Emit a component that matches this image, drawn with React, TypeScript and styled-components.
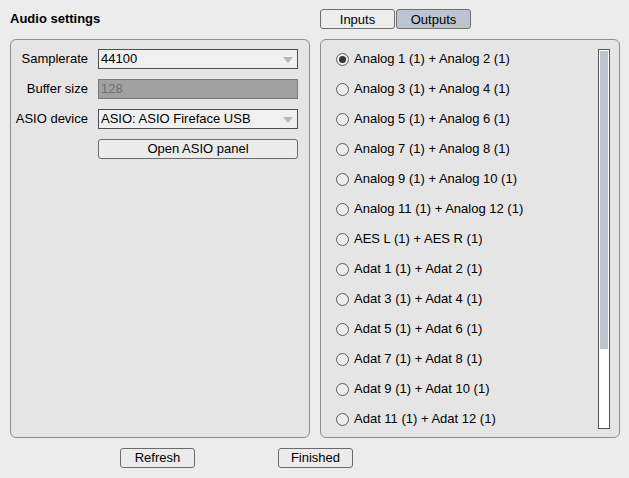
import React from "react";
import styled, { createGlobalStyle } from "styled-components";

const Global = createGlobalStyle`
  html, body { margin: 0; padding: 0; background: #ececec; }
  body { font-family: "Liberation Sans", Arial, sans-serif; font-size: 13px; color: #000; }
  * { box-sizing: border-box; }
`;

const Page = styled.div`
  width: 629px;
  height: 478px;
  padding: 9px 0 0 10px;
  display: grid;
  grid-template-columns: 300px 300px;
  grid-template-rows: 20px 399px 20px;
  column-gap: 10px;
  row-gap: 10px;
`;

const Title = styled.h1`
  margin: 0;
  font-size: 13px;
  font-weight: bold;
  line-height: 20px;
`;

const Tabs = styled.div`
  display: flex;
  gap: 1px;
`;

const Tab = styled.div<{ $active?: boolean }>`
  width: 75px;
  height: 20px;
  border: 1px solid #6e6e6e;
  border-radius: 3px;
  background: ${(p) => (p.$active ? "#bcc4d0" : "#ededed")};
  display: flex;
  align-items: center;
  justify-content: center;
  line-height: 1;
`;

const Panel = styled.div`
  background: #e5e5e5;
  border: 1px solid #8e8e8e;
  border-radius: 6px;
`;

const FormPanel = styled(Panel)`
  padding: 9px 11px 0 0;
  display: grid;
  grid-template-columns: 77px 200px;
  grid-auto-rows: 20px;
  column-gap: 10px;
  row-gap: 10px;
  align-content: start;
`;

const Label = styled.div`
  text-align: right;
  line-height: 20px;
`;

const Field = styled.div<{ $disabled?: boolean }>`
  position: relative;
  height: 20px;
  border: 1px solid ${(p) => (p.$disabled ? "#7a7a7a" : "#4f4f4f")};
  background: ${(p) => (p.$disabled ? "#a1a1a1" : "#f0f0f0")};
  color: ${(p) => (p.$disabled ? "#707070" : "#000")};
  padding-left: 2px;
  line-height: 18px;
  white-space: nowrap;
`;

const Arrow = styled.span`
  position: absolute;
  right: 4px;
  top: 7px;
  width: 0;
  height: 0;
  border-left: 5px solid transparent;
  border-right: 5px solid transparent;
  border-top: 6px solid #b6b6b6;
`;

const Button = styled.button<{ $width?: number }>`
  width: ${(p) => (p.$width ? `${p.$width}px` : "100%")};
  height: 20px;
  border: 1px solid #6a6a6a;
  border-radius: 3px;
  background: #ebebeb;
  font-family: inherit;
  font-size: 13px;
  color: #000;
  padding: 0;
  line-height: 18px;
`;

const ButtonCell = styled.div`
  grid-column: 2;
`;

const ListPanel = styled(Panel)`
  display: flex;
  padding: 9px 9px 9px 15px;
`;

const RadioList = styled.div`
  flex: 1;
  display: flex;
  flex-direction: column;
  gap: 10px;
`;

const RadioRow = styled.label`
  display: flex;
  align-items: center;
  gap: 5px;
  height: 20px;
  line-height: 20px;
`;

const RadioCircle = styled.span<{ $checked?: boolean }>`
  width: 13px;
  height: 13px;
  border-radius: 50%;
  border: 1px solid #5c5c5c;
  background: #ececec;
  display: flex;
  align-items: center;
  justify-content: center;
  &::after {
    content: "";
    display: ${(p) => (p.$checked ? "block" : "none")};
    width: 7px;
    height: 7px;
    border-radius: 50%;
    background: #333;
  }
`;

const Scrollbar = styled.div`
  width: 12px;
  height: 380px;
  border: 1px solid #555;
  background: #fff;
  padding: 1px;
  display: flex;
  flex-direction: column;
`;

const Thumb = styled.div`
  background: #bcc4ce;
`;

const Footer = styled.div`
  grid-column: 1 / span 2;
  display: flex;
  gap: 83px;
  padding-left: 110px;
`;

const outputs = [
  "Analog 1 (1) + Analog 2 (1)",
  "Analog 3 (1) + Analog 4 (1)",
  "Analog 5 (1) + Analog 6 (1)",
  "Analog 7 (1) + Analog 8 (1)",
  "Analog 9 (1) + Analog 10 (1)",
  "Analog 11 (1) + Analog 12 (1)",
  "AES L (1) + AES R (1)",
  "Adat 1 (1) + Adat 2 (1)",
  "Adat 3 (1) + Adat 4 (1)",
  "Adat 5 (1) + Adat 6 (1)",
  "Adat 7 (1) + Adat 8 (1)",
  "Adat 9 (1) + Adat 10 (1)",
  "Adat 11 (1) + Adat 12 (1)",
];

export default function App() {
  return (
    <>
      <Global />
      <Page>
        <Title>Audio settings</Title>
        <Tabs>
          <Tab>Inputs</Tab>
          <Tab $active>Outputs</Tab>
        </Tabs>
        <FormPanel>
          <Label>Samplerate</Label>
          <Field>
            44100
            <Arrow />
          </Field>
          <Label>Buffer size</Label>
          <Field $disabled>128</Field>
          <Label>ASIO device</Label>
          <Field>
            ASIO: ASIO Fireface USB
            <Arrow />
          </Field>
          <ButtonCell>
            <Button>Open ASIO panel</Button>
          </ButtonCell>
        </FormPanel>
        <ListPanel>
          <RadioList>
            {outputs.map((o, i) => (
              <RadioRow key={o}>
                <RadioCircle $checked={i === 0} />
                {o}
              </RadioRow>
            ))}
          </RadioList>
          <Scrollbar>
            <Thumb style={{ height: "298px" }} />
          </Scrollbar>
        </ListPanel>
        <Footer>
          <Button $width={75}>Refresh</Button>
          <Button $width={75}>Finished</Button>
        </Footer>
      </Page>
    </>
  );
}
